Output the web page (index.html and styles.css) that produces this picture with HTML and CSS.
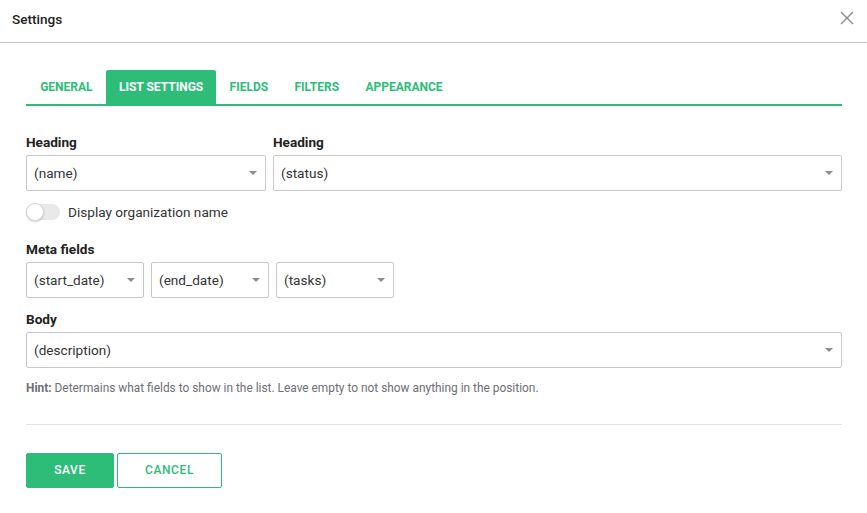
FILE: index.html
```html
<!DOCTYPE HTML>
<html>
<head>
<meta charset="utf-8">
<title>Settings</title>
<link rel="stylesheet" href="styles.css">
</head>

<body>
<div class="dialog">
	<div class="dialog-head">
		<h1>Settings</h1>
		<a href="javascript:;" class="close"><svg width="14" height="14" viewBox="0 0 14 14"><path d="M1 1L13 13M13 1L1 13" stroke="#8a8a8a" stroke-width="1.4" fill="none"/></svg></a>
	</div>
	<div class="dialog-body">
		<ul class="tabs">
			<li>GENERAL</li>
			<li class="ac">LIST SETTINGS</li>
			<li>FIELDS</li>
			<li>FILTERS</li>
			<li>APPEARANCE</li>
		</ul>

		<div class="row">
			<div class="field col-a">
				<label>Heading</label>
				<div class="select">(name)</div>
			</div>
			<div class="field col-b">
				<label>Heading</label>
				<div class="select">(status)</div>
			</div>
		</div>

		<div class="toggle-row">
			<span class="toggle"><i></i></span>
			<span>Display organization name</span>
		</div>

		<div class="field meta">
			<label>Meta fields</label>
			<div class="row">
				<div class="select small">(start_date)</div>
				<div class="select small">(end_date)</div>
				<div class="select small">(tasks)</div>
			</div>
		</div>

		<div class="field body-field">
			<label>Body</label>
			<div class="select">(description)</div>
		</div>

		<p class="hint"><b>Hint:</b> Determains what fields to show in the list. Leave empty to not show anything in the position.</p>

		<div class="actions">
			<a href="javascript:;" class="btn btn-save">SAVE</a>
			<a href="javascript:;" class="btn btn-cancel">CANCEL</a>
		</div>
	</div>
</div>
</body>
</html>
```

FILE: styles.css
```css
* {margin:0; padding:0; box-sizing:border-box;}
li {list-style:none;}
body {font-family:Roboto, "Liberation Sans", sans-serif; color:#212121; background:#fff;}
a {text-decoration:none;}

.dialog-head {height:43px; display:flex; align-items:center; justify-content:space-between; padding:0 13px 0 12px; border-bottom:1px solid #c4c4c4;}
.dialog-head h1 {font-size:13.6px; font-weight:500; color:#222; margin-top:-4px;}
.close {display:flex; margin-top:-6px;}

.dialog-body {padding:27px 25px 0 26px;}

.tabs {display:flex; border-bottom:2px solid #2dbd79; height:36px; padding-left:1px;}
.tabs li {font-size:12px; font-weight:700; color:#2dbd79; padding:0 13.2px; line-height:34px; border-radius:2px 2px 0 0;}
.tabs li.ac {background:#2dbd79; color:#fff;}

.row {display:flex; gap:7px;}
.dialog-body > .row {margin-top:29px;}
.col-a {width:240px;}
.col-b {flex:1;}
label {display:block; font-size:13.6px; font-weight:700; color:#212121; line-height:15px; margin-bottom:5px;}

.select {position:relative; height:36px; border:1px solid #c9c9c9; border-radius:2px; font-size:13.6px; color:#333; line-height:34px; padding-left:7px;}
.select:after {content:""; position:absolute; right:8px; top:15px; border-left:4px solid transparent; border-right:4px solid transparent; border-top:4px solid #8c8c8c;}
.select.small {width:118px;}

.toggle-row {display:flex; align-items:center; gap:8px; margin-top:13px; height:16px; line-height:16px; font-size:13.6px; color:#333;}
.toggle {position:relative; width:34px; height:16px; border-radius:8px; background:#e9e9e9;}
.toggle i {position:absolute; left:0; top:-1px; width:18px; height:18px; border-radius:50%; background:#fff; border:1px solid #d6d6d6; box-shadow:0 1px 2px rgba(0,0,0,0.2);}

.meta {margin-top:22px;}
.body-field {margin-top:14px;}

.hint {font-size:11.9px; line-height:14px; color:#6e6e78; margin-top:13px; padding-bottom:29px; border-bottom:1px solid #e3e3e3;}
.hint b {font-weight:700;}

.actions {display:flex; gap:3px; margin-top:28px;}
.btn {display:block; height:35px; line-height:33px; font-size:12px; font-weight:500; letter-spacing:0.6px; text-align:center; border-radius:2px; border:1px solid #2dbd79;}
.btn-save {width:88px; background:#2dbd79; color:#fff;}
.btn-cancel {width:105px; color:#2dbd79; background:#fff;}
```
